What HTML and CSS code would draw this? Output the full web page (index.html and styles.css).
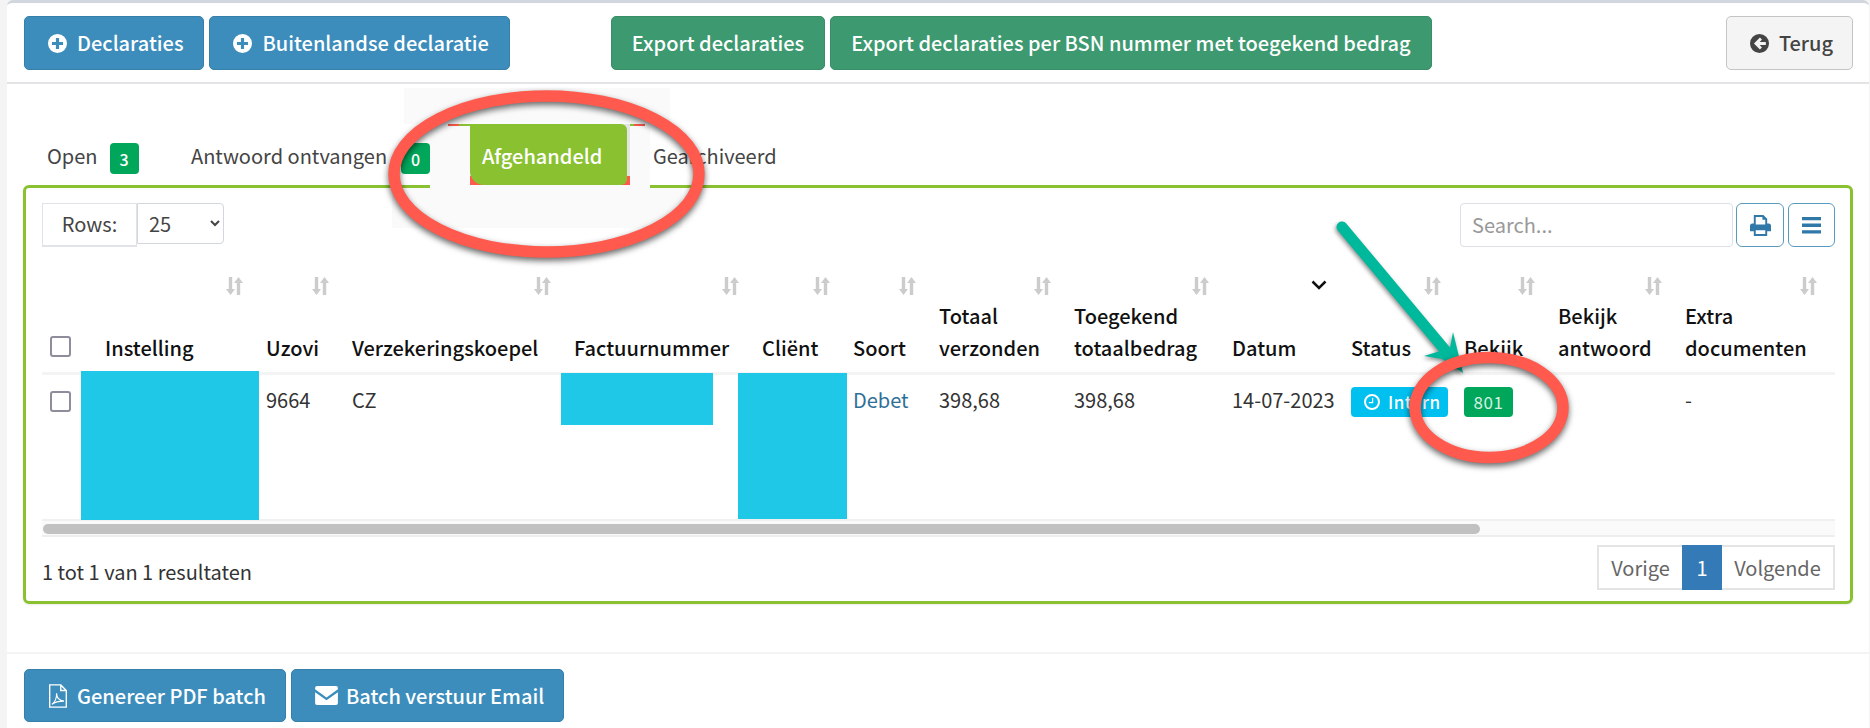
FILE: index.html
```html
<!DOCTYPE html>
<html lang="nl">
<head>
    <meta charset="UTF-8">
    <meta name="viewport" content="width=device-width, initial-scale=1.0">
    <title>Declaraties</title>
    <link rel="stylesheet" href="styles.css">
</head>
<body>
    <svg class="icon-defs" width="0" height="0">
        <symbol id="i-plus" viewBox="0 0 24 24">
            <path fill-rule="evenodd" d="M12 0a12 12 0 1 0 0 24a12 12 0 0 0 0-24zM10 5h4v5h5v4h-5v5h-4v-5H5v-4h5z"/>
        </symbol>
        <symbol id="i-back" viewBox="0 0 24 24">
            <path fill-rule="evenodd" d="M12 0a12 12 0 1 0 0 24a12 12 0 0 0 0-24zM12.5 4.5l2.6 2.6L12.3 10H20v4h-7.700l2.800 2.900l-2.600 2.600L5 12z"/>
        </symbol>
        <symbol id="i-sort" viewBox="0 0 17 18">
            <path d="M2.800 0h3.400v12h2.800l-4.500 6L0 12h2.800zM10.800 18h3.400V6H17L12.500 0L8 6h2.800z"/>
        </symbol>
        <symbol id="i-print" viewBox="0 0 22 22">
            <path fill-rule="evenodd" d="M4 0h10l4 4v5h1.500A2.500 2.500 0 0 1 22 11.500V17h-4v5H4v-5H0v-5.500A2.500 2.500 0 0 1 2.500 9H4zM6 2v8h10V5h-3V2zM6 16v4h10v-4z"/>
        </symbol>
        <symbol id="i-bars" viewBox="0 0 20 18" preserveAspectRatio="none">
            <path d="M0 0h20v3.500H0zM0 7h20v3.500H0zM0 14h20v3.500H0z"/>
        </symbol>
        <symbol id="i-clock" viewBox="0 0 20 20">
            <path fill-rule="evenodd" d="M10 0a10 10 0 1 0 0 20a10 10 0 0 0 0-20zM10 2.500a7.500 7.500 0 1 1 0 15a7.500 7.500 0 0 1 0-15zM10 5h1.500v6.500H6V10h4z"/>
        </symbol>
        <symbol id="i-pdf" viewBox="0 0 20 26">
            <path fill="none" stroke="currentColor" stroke-width="1.500" d="M1 1h12l6 6v18H1zM13 1v6h6"/>
            <path fill="none" stroke="currentColor" stroke-width="1.200" d="M3.500 22c3-2 5-7 5-12c0 5 3 8 8 8.500c-5 0-10 1-13 3.500z"/>
        </symbol>
        <symbol id="i-mail" viewBox="0 0 24 20">
            <path d="M2 0h20a2 2 0 0 1 2 2v1.500L12 12L0 3.500V2a2 2 0 0 1 2-2zM0 6.500L12 15l12-8.500V18a2 2 0 0 1-2 2H2a2 2 0 0 1-2-2z"/>
        </symbol>
    </svg>

    <div class="card">
        <div class="card-header">
            <a class="btn btn-blue"><svg class="btn-icon"><use href="#i-plus"/></svg>Declaraties</a>
            <a class="btn btn-blue"><svg class="btn-icon"><use href="#i-plus"/></svg>Buitenlandse declaratie</a>
            <a class="btn btn-green export-first">Export declaraties</a>
            <a class="btn btn-green">Export declaraties per BSN nummer met toegekend bedrag</a>
            <a class="btn btn-default back"><svg class="btn-icon"><use href="#i-back"/></svg>Terug</a>
        </div>

        <div class="card-body">
            <ul class="tabs">
                <li class="tab tab-open">Open <span class="count">3</span></li>
                <li class="tab tab-answer">Antwoord ontvangen <span class="count">0</span></li>
                <li class="tab tab-done"><span class="tab-done-inner">Afgehandeld</span></li>
                <li class="tab tab-archive">Gearchiveerd</li>
            </ul>

            <div class="panel">
                <div class="toolbar">
                    <span class="rows-label">Rows:</span>
                    <select class="rows-select"><option>25</option></select>
                    <input class="search" type="text" placeholder="Search...">
                    <button class="tool-btn tool-print"><svg class="tool-icon"><use href="#i-print"/></svg></button>
                    <button class="tool-btn tool-menu"><svg class="tool-icon tool-icon-bars"><use href="#i-bars"/></svg></button>
                </div>

                <table class="results">
                    <colgroup>
                        <col class="w-check"><col class="w-inst"><col class="w-uzovi"><col class="w-koepel">
                        <col class="w-factuur"><col class="w-client"><col class="w-soort"><col class="w-totaal">
                        <col class="w-toeg"><col class="w-datum"><col class="w-status"><col class="w-bekijk">
                        <col class="w-antw"><col class="w-extra">
                    </colgroup>
                    <thead>
                        <tr>
                            <th class="check-cell"><input class="check" type="checkbox"></th>
                            <th>Instelling<svg class="sort"><use href="#i-sort"/></svg></th>
                            <th>Uzovi<svg class="sort"><use href="#i-sort"/></svg></th>
                            <th>Verzekeringskoepel<svg class="sort"><use href="#i-sort"/></svg></th>
                            <th>Factuurnummer<svg class="sort"><use href="#i-sort"/></svg></th>
                            <th>Cliënt<svg class="sort"><use href="#i-sort"/></svg></th>
                            <th>Soort<svg class="sort"><use href="#i-sort"/></svg></th>
                            <th>Totaal<br>verzonden<svg class="sort"><use href="#i-sort"/></svg></th>
                            <th>Toegekend<br>totaalbedrag<svg class="sort"><use href="#i-sort"/></svg></th>
                            <th>Datum<svg class="sort-active" viewBox="0 0 16 10"><path d="M1.500 1.500L8 8l6.500-6.500"/></svg></th>
                            <th>Status<svg class="sort"><use href="#i-sort"/></svg></th>
                            <th>Bekijk<svg class="sort"><use href="#i-sort"/></svg></th>
                            <th>Bekijk<br>antwoord<svg class="sort"><use href="#i-sort"/></svg></th>
                            <th>Extra<br>documenten<svg class="sort"><use href="#i-sort"/></svg></th>
                        </tr>
                    </thead>
                    <tbody>
                        <tr>
                            <td class="check-cell"><input class="check" type="checkbox"></td>
                            <td></td>
                            <td>9664</td>
                            <td>CZ</td>
                            <td></td>
                            <td></td>
                            <td><a class="link">Debet</a></td>
                            <td>398,68</td>
                            <td>398,68</td>
                            <td>14-07-2023</td>
                            <td><span class="label label-info"><svg class="label-icon"><use href="#i-clock"/></svg>Intern</span></td>
                            <td><span class="label label-success">801</span></td>
                            <td></td>
                            <td>-</td>
                        </tr>
                    </tbody>
                </table>

                <div class="scroll-track"><div class="scroll-thumb"></div></div>

                <div class="panel-foot">
                    <span class="result-count">1 tot 1 van 1 resultaten</span>
                    <div class="pager">
                        <a class="page-item">Vorige</a>
                        <a class="page-item active">1</a>
                        <a class="page-item">Volgende</a>
                    </div>
                </div>
            </div>
        </div>

        <div class="card-footer">
            <a class="btn btn-blue btn-low"><svg class="btn-icon btn-icon-pdf"><use href="#i-pdf"/></svg>Genereer PDF batch</a>
            <a class="btn btn-blue btn-low"><svg class="btn-icon btn-icon-mail"><use href="#i-mail"/></svg>Batch verstuur Email</a>
        </div>
    </div>

    <!-- redaction blocks and markup painted over the screenshot -->
    <div class="redact redact-inst"></div>
    <div class="redact redact-factuur"></div>
    <div class="redact redact-client"></div>

    <div class="patch patch-top"></div>
    <div class="patch patch-tab"></div>
    <div class="patch patch-under"></div>

    <svg class="markup" viewBox="0 0 1870 728">
        <g class="markup-arrow">
            <path class="arrow-shaft" d="M1342 227L1450 356"/>
            <path class="arrow-head" d="M1463 373L1453 332L1450 348L1424 356L1442 359z"/>
        </g>
        <ellipse class="markup-ring" cx="546.500" cy="174" rx="152.500" ry="78"/>
        <ellipse class="markup-ring" cx="1489" cy="407.500" rx="74" ry="50"/>
    </svg>
</body>
</html>
```

FILE: styles.css
```css
* {
    margin: 0;
    padding: 0;
    box-sizing: border-box;
}

html, body {
    height: 728px;
    overflow: hidden;
}

body {
    position: relative;
    background: #f4f4f4;
    color: #333;
    font-family: "Noto Sans CJK SC", "Liberation Sans", sans-serif;
    font-size: 20px;
    line-height: 28px;
}

.icon-defs {
    position: absolute;
}

.card {
    margin: 0 1px 0 7px;
    height: 728px;
    background: #fff;
    border-top: 3px solid #d2d6de;
    border-radius: 6px 6px 0 0;
}

.card-header {
    display: flex;
    gap: 5px;
    height: 81px;
    padding: 13px 16px 0 17px;
    border-bottom: 2px solid #e2e4e6;
}

.btn {
    display: inline-flex;
    align-items: center;
    height: 54px;
    padding: 0 20px 0 23px;
    border: 1px solid transparent;
    border-radius: 5px;
    color: #fff;
    font-weight: 500;
    white-space: nowrap;
}

.btn-low {
    height: 53px;
    padding-right: 19px;
}

.btn-blue {
    background: #3c8dbc;
    border-color: #367fa9;
}

.btn-green {
    padding: 0 20px;
    background: #3d9970;
    border-color: #398e68;
}

.btn-default {
    background: #f4f4f4;
    border-color: #c4c4c4;
    color: #444;
}

.export-first {
    margin-left: 96px;
}

.back {
    margin-left: auto;
    padding: 0 19px 0 23px;
}

.btn-icon {
    width: 19px;
    height: 19px;
    margin-right: 10px;
    fill: currentColor;
}

.btn-icon-pdf {
    width: 20px;
    height: 24px;
    margin-right: 9px;
    fill: none;
    color: #fff;
}

.btn-icon-mail {
    width: 23px;
    height: 19px;
    margin-right: 8px;
}

.card-body {
    padding: 40px 16px 0 16px;
}

.tabs {
    display: flex;
    height: 61px;
    list-style: none;
    position: relative;
    z-index: 3;
}

.tab {
    display: flex;
    align-items: center;
    gap: 12px;
    padding-top: 2px;
    color: #444;
}

.tab-open {
    width: 168px;
    padding-left: 24px;
}

.tab-answer {
    width: 279px;
    gap: 14px;
}

.tab-done {
    width: 160px;
    padding: 0;
    background: linear-gradient(#e4e4e4 85%, #ff5a4d 85%);
    color: #fff;
    font-weight: 500;
}

.tab-done-inner {
    display: flex;
    align-items: center;
    width: 157px;
    height: 100%;
    padding-left: 12px;
    padding-top: 2px;
    background: #8ac130;
    border-radius: 0 6px 6px 14px;
}

.tab-archive {
    margin-left: 23px;
}

.count {
    display: inline-flex;
    align-items: center;
    justify-content: center;
    width: 29px;
    height: 31px;
    margin-top: 6px;
    background: #00a65a;
    border-radius: 4px;
    color: #fff;
    font-size: 16px;
    font-weight: 500;
}

.panel {
    height: 419px;
    padding: 15px 15px 0 16px;
    border: 3px solid #8ac130;
    border-radius: 6px;
    box-shadow: 0 1px 2px rgba(0, 0, 0, 0.08);
}

.toolbar {
    display: flex;
    height: 44px;
}

.rows-label {
    display: flex;
    align-items: center;
    justify-content: center;
    width: 95px;
    padding-bottom: 2px;
    border: 1px solid #e0e3e8;
    border-bottom-width: 2px;
    color: #444;
}

.rows-select {
    width: 87px;
    height: 41px;
    padding-left: 7px;
    background: #fff;
    border: 1px solid #d2d6de;
    border-radius: 0 4px 4px 0;
    color: #444;
    font: inherit;
}

.search {
    width: 273px;
    margin-left: auto;
    padding: 0 11px;
    border: 1.500px solid #dcdfe6;
    border-radius: 4px;
    color: #444;
    font: inherit;
    outline: none;
}

.search::placeholder {
    color: #999;
}

.tool-btn {
    display: flex;
    align-items: center;
    justify-content: center;
    height: 44px;
    background: #fff;
    border: 1.500px solid #5a9abf;
    border-radius: 6px;
}

.tool-print {
    width: 48px;
    margin-left: 3px;
}

.tool-menu {
    width: 47px;
    margin-left: 4px;
}

.tool-icon {
    width: 21px;
    height: 21px;
    fill: #2f78a8;
}

.tool-icon-bars {
    width: 19px;
    height: 17px;
}

.results {
    width: 1793px;
    table-layout: fixed;
    border-collapse: collapse;
}

.w-check { width: 55px; }
.w-inst { width: 161px; }
.w-uzovi { width: 86px; }
.w-koepel { width: 222px; }
.w-factuur { width: 188px; }
.w-client { width: 91px; }
.w-soort { width: 86px; }
.w-totaal { width: 135px; }
.w-toeg { width: 158px; }
.w-datum { width: 119px; }
.w-status { width: 113px; }
.w-bekijk { width: 94px; }
.w-antw { width: 127px; }
.w-extra { width: 158px; }

.results th {
    position: relative;
    height: 126px;
    padding: 0 0 8px 8px;
    border-bottom: 3px solid #f4f4f4;
    color: #111;
    font-weight: 500;
    line-height: 32px;
    text-align: left;
    vertical-align: bottom;
    white-space: nowrap;
}

.results td {
    height: 147px;
    padding: 11px 0 0 8px;
    border-bottom: 2px solid #f0f0f0;
    vertical-align: top;
}

.results .check-cell {
    padding-left: 8px;
}

.check {
    display: block;
    width: 21px;
    height: 21px;
    background: #fff;
    border: 2px solid #8f8c9c;
    border-radius: 3px;
    appearance: none;
}

th .check {
    margin-bottom: 7px;
}

td .check {
    margin-top: 5px;
}

.sort {
    position: absolute;
    top: 30px;
    right: 15px;
    width: 17px;
    height: 18px;
    fill: #ccc;
}

th:last-child .sort {
    right: 18px;
}

.sort-active {
    position: absolute;
    top: 33px;
    right: 16px;
    width: 16px;
    height: 10px;
    fill: none;
    stroke: #111;
    stroke-width: 2.500;
}

.link {
    color: #2f7097;
}

.label {
    display: inline-flex;
    align-items: center;
    height: 30px;
    margin-top: 1px;
    border-radius: 4px;
    color: #fff;
    font-size: 17px;
    font-weight: 500;
    letter-spacing: 0.5px;
}

.label-info {
    width: 97px;
    padding-left: 13px;
    background: #00c0ef;
}

.label-success {
    justify-content: center;
    width: 49px;
    background: #00a65a;
    color: #d8f0e4;
    font-weight: 400;
}

.label-icon {
    width: 16px;
    height: 16px;
    margin-right: 8px;
    fill: #fff;
}

.scroll-track {
    height: 16px;
    padding: 3px 0 3px 1px;
    background: #fafafa;
    border-bottom: 2px solid #eee;
}

.scroll-thumb {
    width: 1437px;
    height: 10px;
    background: #c1c1c1;
    border-radius: 5px;
}

.panel-foot {
    display: flex;
    justify-content: space-between;
    margin-top: 8px;
}

.result-count {
    padding-top: 13px;
}

.pager {
    display: flex;
    height: 45px;
    border: 2px solid #e4e4e4;
}

.page-item {
    display: flex;
    align-items: center;
    justify-content: center;
    width: 83px;
    color: #666;
}

.page-item:last-child {
    width: 111px;
}

.page-item.active {
    width: 40px;
    margin: -2px 0;
    background: #337ab7;
    color: #fff;
}

.card-footer {
    display: flex;
    gap: 5px;
    margin-top: 48px;
    padding: 15px 17px 0 17px;
    border-top: 2px solid #f4f4f4;
}

/* cyan blocks hiding names in the screenshot */
.redact {
    position: absolute;
    background: #1ec8e6;
}

.redact-inst {
    left: 81px;
    top: 371px;
    width: 178px;
    height: 149px;
}

.redact-factuur {
    left: 561px;
    top: 373px;
    width: 152px;
    height: 52px;
}

.redact-client {
    left: 738px;
    top: 373px;
    width: 109px;
    height: 146px;
}

/* light paint patches around the highlighted tab */
.patch {
    position: absolute;
    background: #fafafa;
    z-index: 2;
}

.patch-top {
    left: 404px;
    top: 88px;
    width: 266px;
    height: 36px;
}

.patch-tab {
    left: 430px;
    top: 124px;
    width: 220px;
    height: 64px;
}

.patch-tab::before {
    content: "";
    position: absolute;
    left: 18px;
    top: 0;
    width: 197px;
    height: 2px;
    background: linear-gradient(90deg, #ff5a4d 11px, #8ac130 11px, #8ac130 186px, #ff5a4d 186px);
}

.patch-under {
    left: 392px;
    top: 188px;
    width: 290px;
    height: 40px;
}

.markup {
    position: absolute;
    left: 0;
    top: 0;
    width: 1870px;
    height: 728px;
    z-index: 5;
    pointer-events: none;
}

.markup-arrow {
    filter: drop-shadow(-1px 2px 2px rgba(0, 0, 0, 0.45));
}

.arrow-shaft {
    fill: none;
    stroke: #00b89c;
    stroke-width: 11;
    stroke-linecap: round;
}

.arrow-head {
    fill: #00b89c;
}

.markup-ring {
    fill: none;
    stroke: #ff5a4d;
    stroke-width: 11.500;
    filter: drop-shadow(0 3px 3px rgba(0, 0, 0, 0.6));
}
```
